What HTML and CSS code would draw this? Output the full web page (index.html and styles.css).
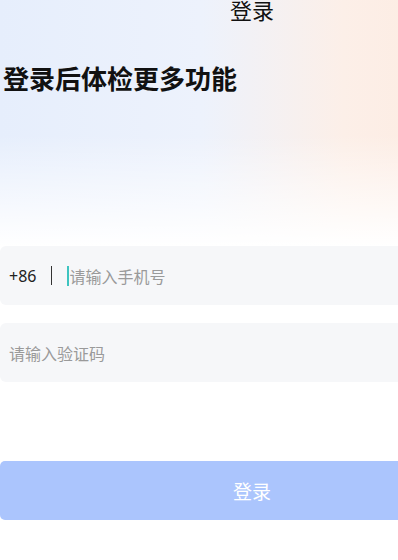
FILE: index.html
```html
<!DOCTYPE html>
<html lang="zh-CN">
<head>
    <meta charset="UTF-8">
    <meta name="viewport" content="width=device-width, initial-scale=1.0">
    <title>登录</title>
    <link rel="stylesheet" href="styles.css">
</head>
<body>
    <div class="page">
        <div class="hero">
            <div class="nav">登录</div>
            <h1 class="slogan">登录后体检更多功能</h1>
        </div>
        <div class="form">
            <div class="field">
                <span class="code">+86</span>
                <span class="split"></span>
                <span class="cursor"></span>
                <span class="holder">请输入手机号</span>
            </div>
            <div class="field">
                <span class="holder">请输入验证码</span>
            </div>
            <button class="btn">登录</button>
        </div>
    </div>
</body>
</html>
```

FILE: styles.css
```css
* {
    margin: 0;
    padding: 0;
    box-sizing: border-box;
}

html,
body {
    width: 398px;
    height: 560px;
    overflow: hidden;
    background: #fff;
}

body {
    font-family: "Noto Sans", "Noto Sans CJK SC", sans-serif;
    color: #111;
}

.page {
    width: 504px;
}

.hero {
    height: 247px;
    background:
        linear-gradient(180deg, rgba(255, 255, 255, 0) 0%, rgba(255, 255, 255, 0) 55%, #fff 100%),
        linear-gradient(90deg, #e6eefc 0%, #edf2fc 40%, #fcefe8 68%, #fde9de 100%);
}

.nav {
    height: 22px;
    line-height: 22px;
    margin-top: -1px;
    text-align: center;
    font-size: 22px;
    color: #111;
}

.slogan {
    margin-top: 44px;
    padding-left: 3px;
    font-size: 26px;
    line-height: 28px;
    font-weight: bold;
    color: #111;
}

.form {
    display: flex;
    flex-direction: column;
}

.field {
    display: flex;
    align-items: center;
    height: 59px;
    padding-left: 9px;
    margin-bottom: 18px;
    background: #f6f7f9;
    border-radius: 6px;
}

.field .code {
    font-size: 16px;
    color: #222;
}

.field .split {
    width: 1px;
    height: 19px;
    margin-left: 15px;
    background: #333;
}

.field .cursor {
    width: 2px;
    height: 20px;
    margin-left: 15px;
    background: #3ec4c0;
}

.field .holder {
    font-size: 16px;
    color: #9a9a9a;
}

.btn {
    height: 59px;
    margin-top: 61px;
    border: none;
    outline: none;
    border-radius: 5px;
    background: #abc5fd;
    color: #fff;
    font-family: "Noto Sans", "Noto Sans CJK SC", sans-serif;
    font-size: 19px;
}
```
